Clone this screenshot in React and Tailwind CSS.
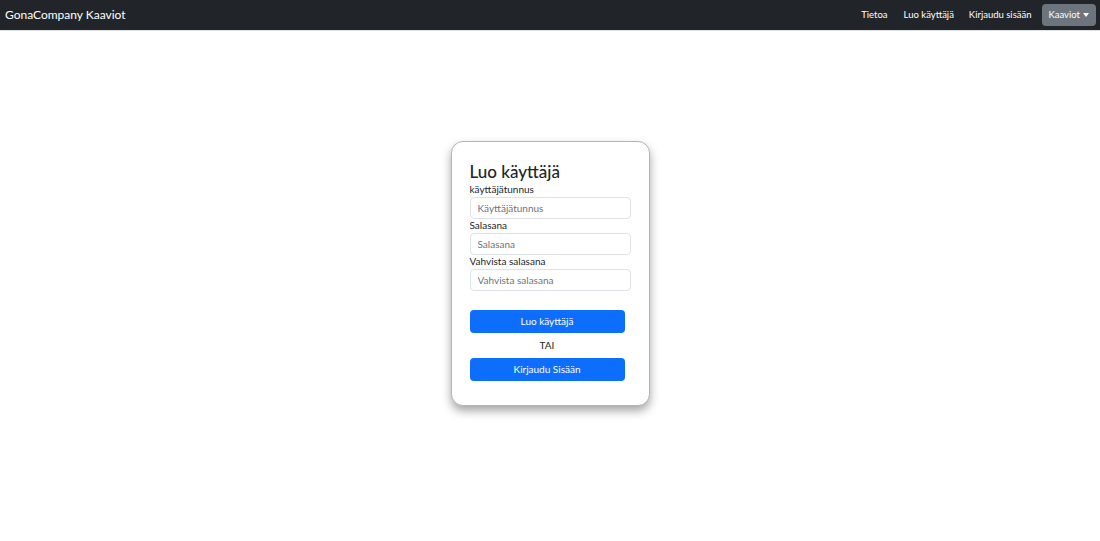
const Field = ({ label, placeholder, type = "text" }) => (
  <div className="flex flex-col">
    <label className="text-[10px] leading-[12px] text-[#212529] mb-[2px]">{label}</label>
    <input
      type={type}
      placeholder={placeholder}
      className="h-[22px] w-[161px] rounded-[4px] border border-[#dee2e6] bg-white px-[7px] text-[10px] text-[#212529] placeholder:text-[#6c757d] outline-none"
    />
  </div>
);

export default function App() {
  return (
    <div className="min-h-[541px] bg-white font-['Lato',sans-serif]">
      <nav className="flex h-[31px] items-center justify-between bg-[#212529] pl-[5px] pr-[4px] border-b border-[#dee2e6]">
        <a className="text-[12px] text-white">GonaCompany Kaaviot</a>
        <div className="flex items-center text-[9.5px] text-white">
          <a className="mr-[16px]">Tietoa</a>
          <a className="mr-[15px]">Luo käyttäjä</a>
          <a className="mr-[10px]">Kirjaudu sisään</a>
          <button className="flex h-[22px] items-center gap-[3px] rounded-[4px] bg-[#6c757d] px-[7px] text-[9.5px] text-white">
            Kaaviot
            <span className="inline-block border-x-[3px] border-t-[4px] border-x-transparent border-t-white"></span>
          </button>
        </div>
      </nav>
      <main className="flex justify-center pt-[110px]">
        <div className="w-[199px] rounded-[12px] border border-[#adb5bd] bg-white px-[18px] pt-[19px] pb-[24px] shadow-[0_5px_10px_rgba(0,0,0,0.35)]">
          <h2 className="text-[17px] font-medium leading-[22px] text-[#212529]">Luo käyttäjä</h2>
          <div className="flex flex-col">
            <Field label="käyttäjätunnus" placeholder="Käyttäjätunnus" />
            <Field label="Salasana" placeholder="Salasana" type="password" />
            <Field label="Vahvista salasana" placeholder="Vahvista salasana" type="password" />
          </div>
          <button className="mt-[19px] block h-[23px] w-[155px] rounded-[4px] bg-[#0d6efd] text-[10px] text-white">Luo käyttäjä</button>
          <div className="w-[155px] py-[6px] text-center text-[10px] leading-[13px] text-[#212529]">TAI</div>
          <button className="block h-[23px] w-[155px] rounded-[4px] bg-[#0d6efd] text-[10px] text-white">Kirjaudu Sisään</button>
        </div>
      </main>
    </div>
  );
}
